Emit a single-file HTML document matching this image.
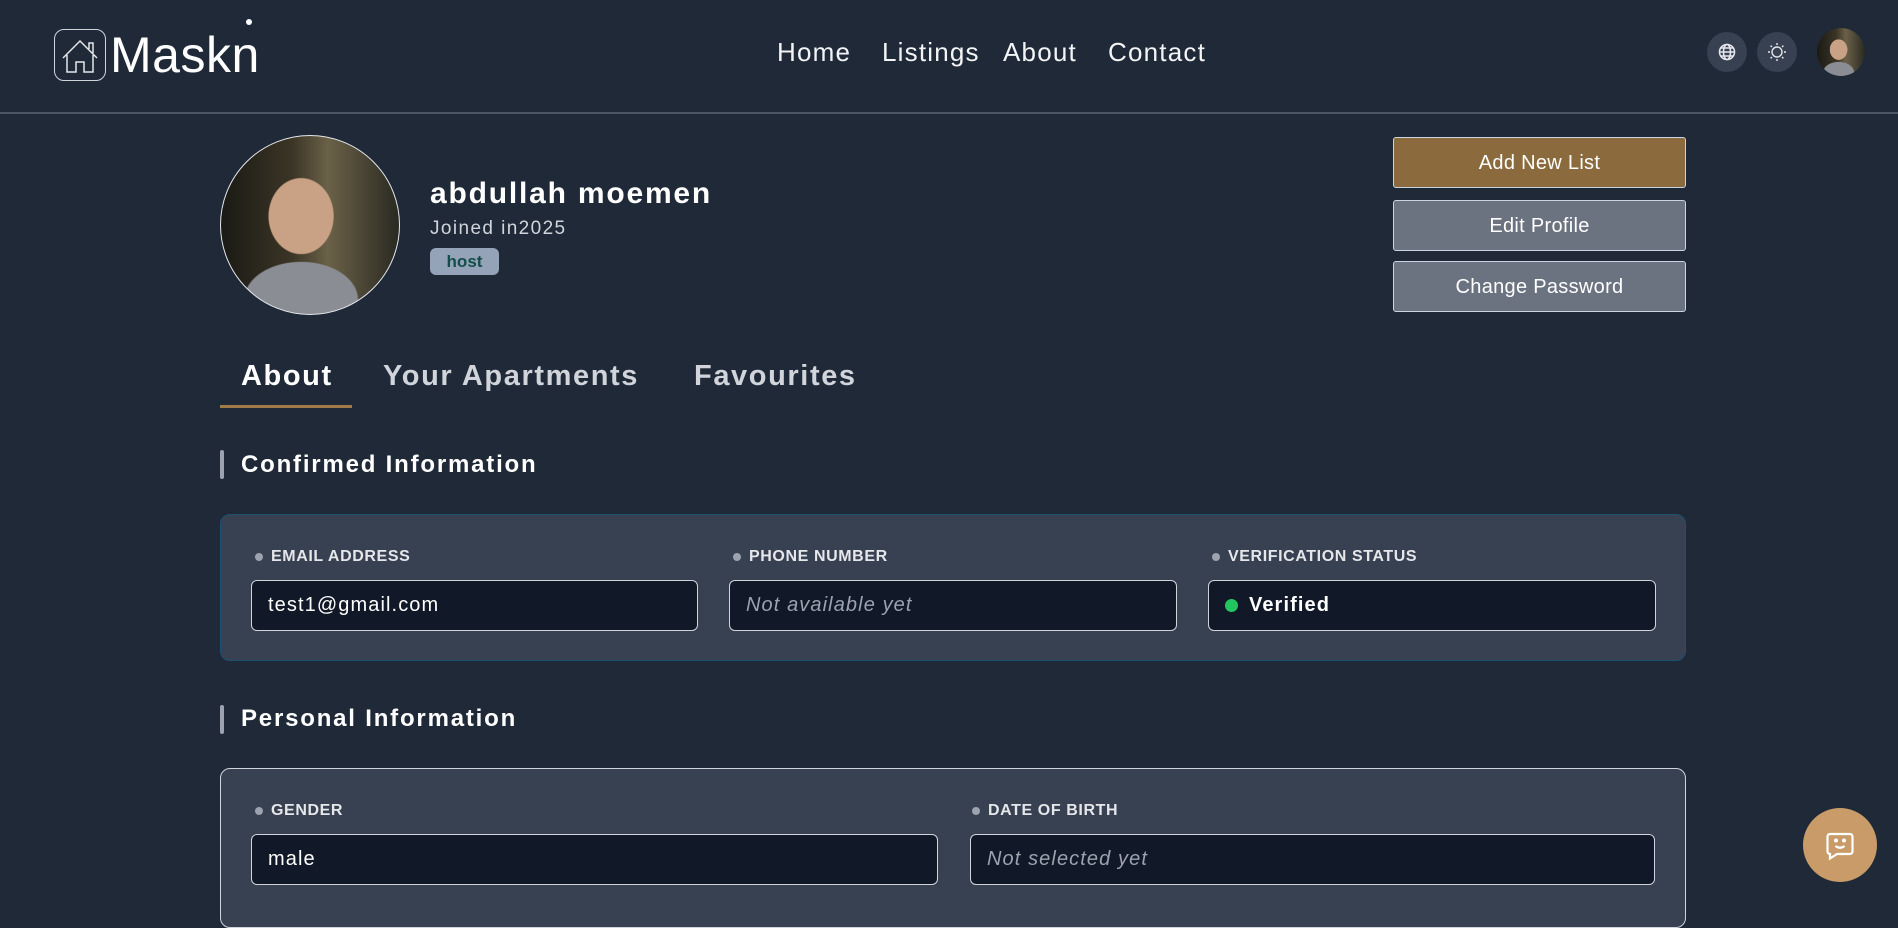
<!DOCTYPE html>
<html><head><meta charset="utf-8"><style>
*{box-sizing:border-box;margin:0;padding:0}
body{width:1898px;height:911px;overflow:hidden;background:#1f2937;font-family:"Liberation Sans",sans-serif;color:#fff;position:relative}
.a{position:absolute}
.hdr{left:0;top:0;width:1898px;height:114px;border-bottom:2px solid #4b5563}
.nav{top:37px;font-size:26px;color:#f3f4f6;letter-spacing:1.2px}
.circ{width:40px;height:40px;border-radius:50%;background:#374151;top:32px}
.av{border-radius:50%;overflow:hidden;background:radial-gradient(ellipse 30% 35% at 45% 45%,#c9a184 0 60%,transparent 62%),radial-gradient(ellipse 45% 30% at 45% 92%,#8a8d94 0 70%,transparent 72%),linear-gradient(90deg,#1a1a14,#3b3526 40%,#6b6148 60%,#2a2a22)}
.btn{left:1393px;width:293px;height:51px;border:1px solid #cbd5e1;border-radius:3px;font-size:20px;text-align:center;line-height:51px;color:#fff;background:#6b7280;letter-spacing:.3px}
.tab{top:360px;font-size:29px;font-weight:bold;color:#d1d5db;letter-spacing:1.6px}
.sh{font-size:24px;font-weight:bold;left:241px;letter-spacing:1.8px}
.bar{left:220px;width:4px;height:29px;background:#9ca3af;border-radius:2px}
.card{left:220px;width:1466px;background:#374151;border-radius:10px}
.lbl{font-size:16px;font-weight:bold;color:#e5e7eb;letter-spacing:.6px}
.lbl:before{content:"";position:absolute;left:-16px;top:5px;width:8px;height:8px;border-radius:50%;background:#9ca3af}
.inp{height:51px;background:#111827;border:1px solid #d1d5db;border-radius:6px;font-size:20px;padding-left:16px;line-height:49px;letter-spacing:1.1px}
.ph{font-style:italic;color:#9ca3af}
</style></head><body>
<div class="a hdr"></div>
<div class="a" style="left:54px;top:29px;width:52px;height:52px;border:1.5px solid #d1d5db;border-radius:10px">
<svg width="50" height="50" viewBox="0 0 50 50"><path d="M8 28 L25 11 L42 28 M12 25 V42 H21 V32 H29 V42 H38 V25 M34 19 V13 H38 V23" fill="none" stroke="#e5e7eb" stroke-width="1.5"/></svg></div>
<div class="a" style="left:110px;top:26px;font-size:50px;color:#fff;letter-spacing:.5px">Maskn</div>
<div class="a" style="left:246px;top:19px;width:6px;height:6px;border-radius:50%;background:#fff"></div>
<div class="a nav" style="left:777px">Home</div>
<div class="a nav" style="left:882px">Listings</div>
<div class="a nav" style="left:1003px">About</div>
<div class="a nav" style="left:1108px">Contact</div>
<div class="a circ" style="left:1707px"><svg width="40" height="40" viewBox="0 0 40 40" fill="none" stroke="#e5e7eb" stroke-width="1.6"><circle cx="20" cy="20" r="7.5"/><ellipse cx="20" cy="20" rx="3.5" ry="7.5"/><path d="M12.5 20h15M13.5 16h13M13.5 24h13"/></svg></div>
<div class="a circ" style="left:1757px"><svg width="40" height="40" viewBox="0 0 40 40" fill="none" stroke="#e5e7eb" stroke-width="1.4"><circle cx="20" cy="20" r="5"/><path d="M20 11v2M20 27v2M11 20h2M27 20h2M13.6 13.6l1.4 1.4M25 25l1.4 1.4M13.6 26.4l1.4-1.4M25 15l1.4-1.4"/></svg></div>
<div class="a av" style="left:1817px;top:28px;width:48px;height:48px"></div>
<div class="a av" style="left:220px;top:135px;width:180px;height:180px;border:1.5px solid #e5e7eb"></div>
<div class="a" style="left:430px;top:177px;font-size:30px;font-weight:bold;letter-spacing:1.8px">abdullah moemen</div>
<div class="a" style="left:430px;top:218px;font-size:19px;color:#d1d5db;letter-spacing:1.4px">Joined in2025</div>
<div class="a" style="left:430px;top:248px;width:69px;height:27px;border-radius:6px;background:#94a3b8;color:#134e4a;font-weight:bold;font-size:17px;text-align:center;line-height:27px">host</div>
<div class="a btn" style="top:137px;background:#8b6b3d">Add New List</div>
<div class="a btn" style="top:200px">Edit Profile</div>
<div class="a btn" style="top:261px">Change Password</div>
<div class="a tab" style="left:241px;color:#fff">About</div>
<div class="a" style="left:220px;top:405px;width:132px;height:3px;background:#a07a48"></div>
<div class="a tab" style="left:383px">Your Apartments</div>
<div class="a tab" style="left:694px">Favourites</div>
<div class="a bar" style="top:450px"></div>
<div class="a sh" style="top:451px">Confirmed Information</div>
<div class="a card" style="top:514px;height:147px;border:1px solid #1e5073"></div>
<div class="a lbl" style="left:271px;top:548px">EMAIL ADDRESS</div>
<div class="a lbl" style="left:749px;top:548px">PHONE NUMBER</div>
<div class="a lbl" style="left:1228px;top:548px">VERIFICATION STATUS</div>
<div class="a inp" style="left:251px;top:580px;width:447px">test1@gmail.com</div>
<div class="a inp ph" style="left:729px;top:580px;width:448px">Not available yet</div>
<div class="a inp" style="left:1208px;top:580px;width:448px;font-weight:bold;padding-left:40px"><span style="position:absolute;left:16px;top:18px;width:13px;height:13px;border-radius:50%;background:#22c55e"></span>Verified</div>
<div class="a bar" style="top:705px"></div>
<div class="a sh" style="top:705px">Personal Information</div>
<div class="a card" style="top:768px;height:160px;border:1px solid #d1d5db"></div>
<div class="a lbl" style="left:271px;top:802px">GENDER</div>
<div class="a lbl" style="left:988px;top:802px">DATE OF BIRTH</div>
<div class="a inp" style="left:251px;top:834px;width:687px">male</div>
<div class="a inp ph" style="left:970px;top:834px;width:685px">Not selected yet</div>
<div class="a" style="left:1803px;top:808px;width:74px;height:74px;border-radius:50%;background:#c89b68"><svg width="74" height="74" viewBox="0 0 74 74" fill="none" stroke="#fff" stroke-width="2.2"><path d="M27 26h20a2.5 2.5 0 0 1 2.5 2.5v15a2.5 2.5 0 0 1-2.5 2.5H34l-7 4.5v-4.5a2.5 2.5 0 0 1-2.5-2.5v-15A2.5 2.5 0 0 1 27 26z"/><path d="M32.5 38q4.5 3.5 9 0"/><circle cx="33" cy="32.5" r=".9" fill="#fff"/><circle cx="41" cy="32.5" r=".9" fill="#fff"/></svg></div>
</body></html>
